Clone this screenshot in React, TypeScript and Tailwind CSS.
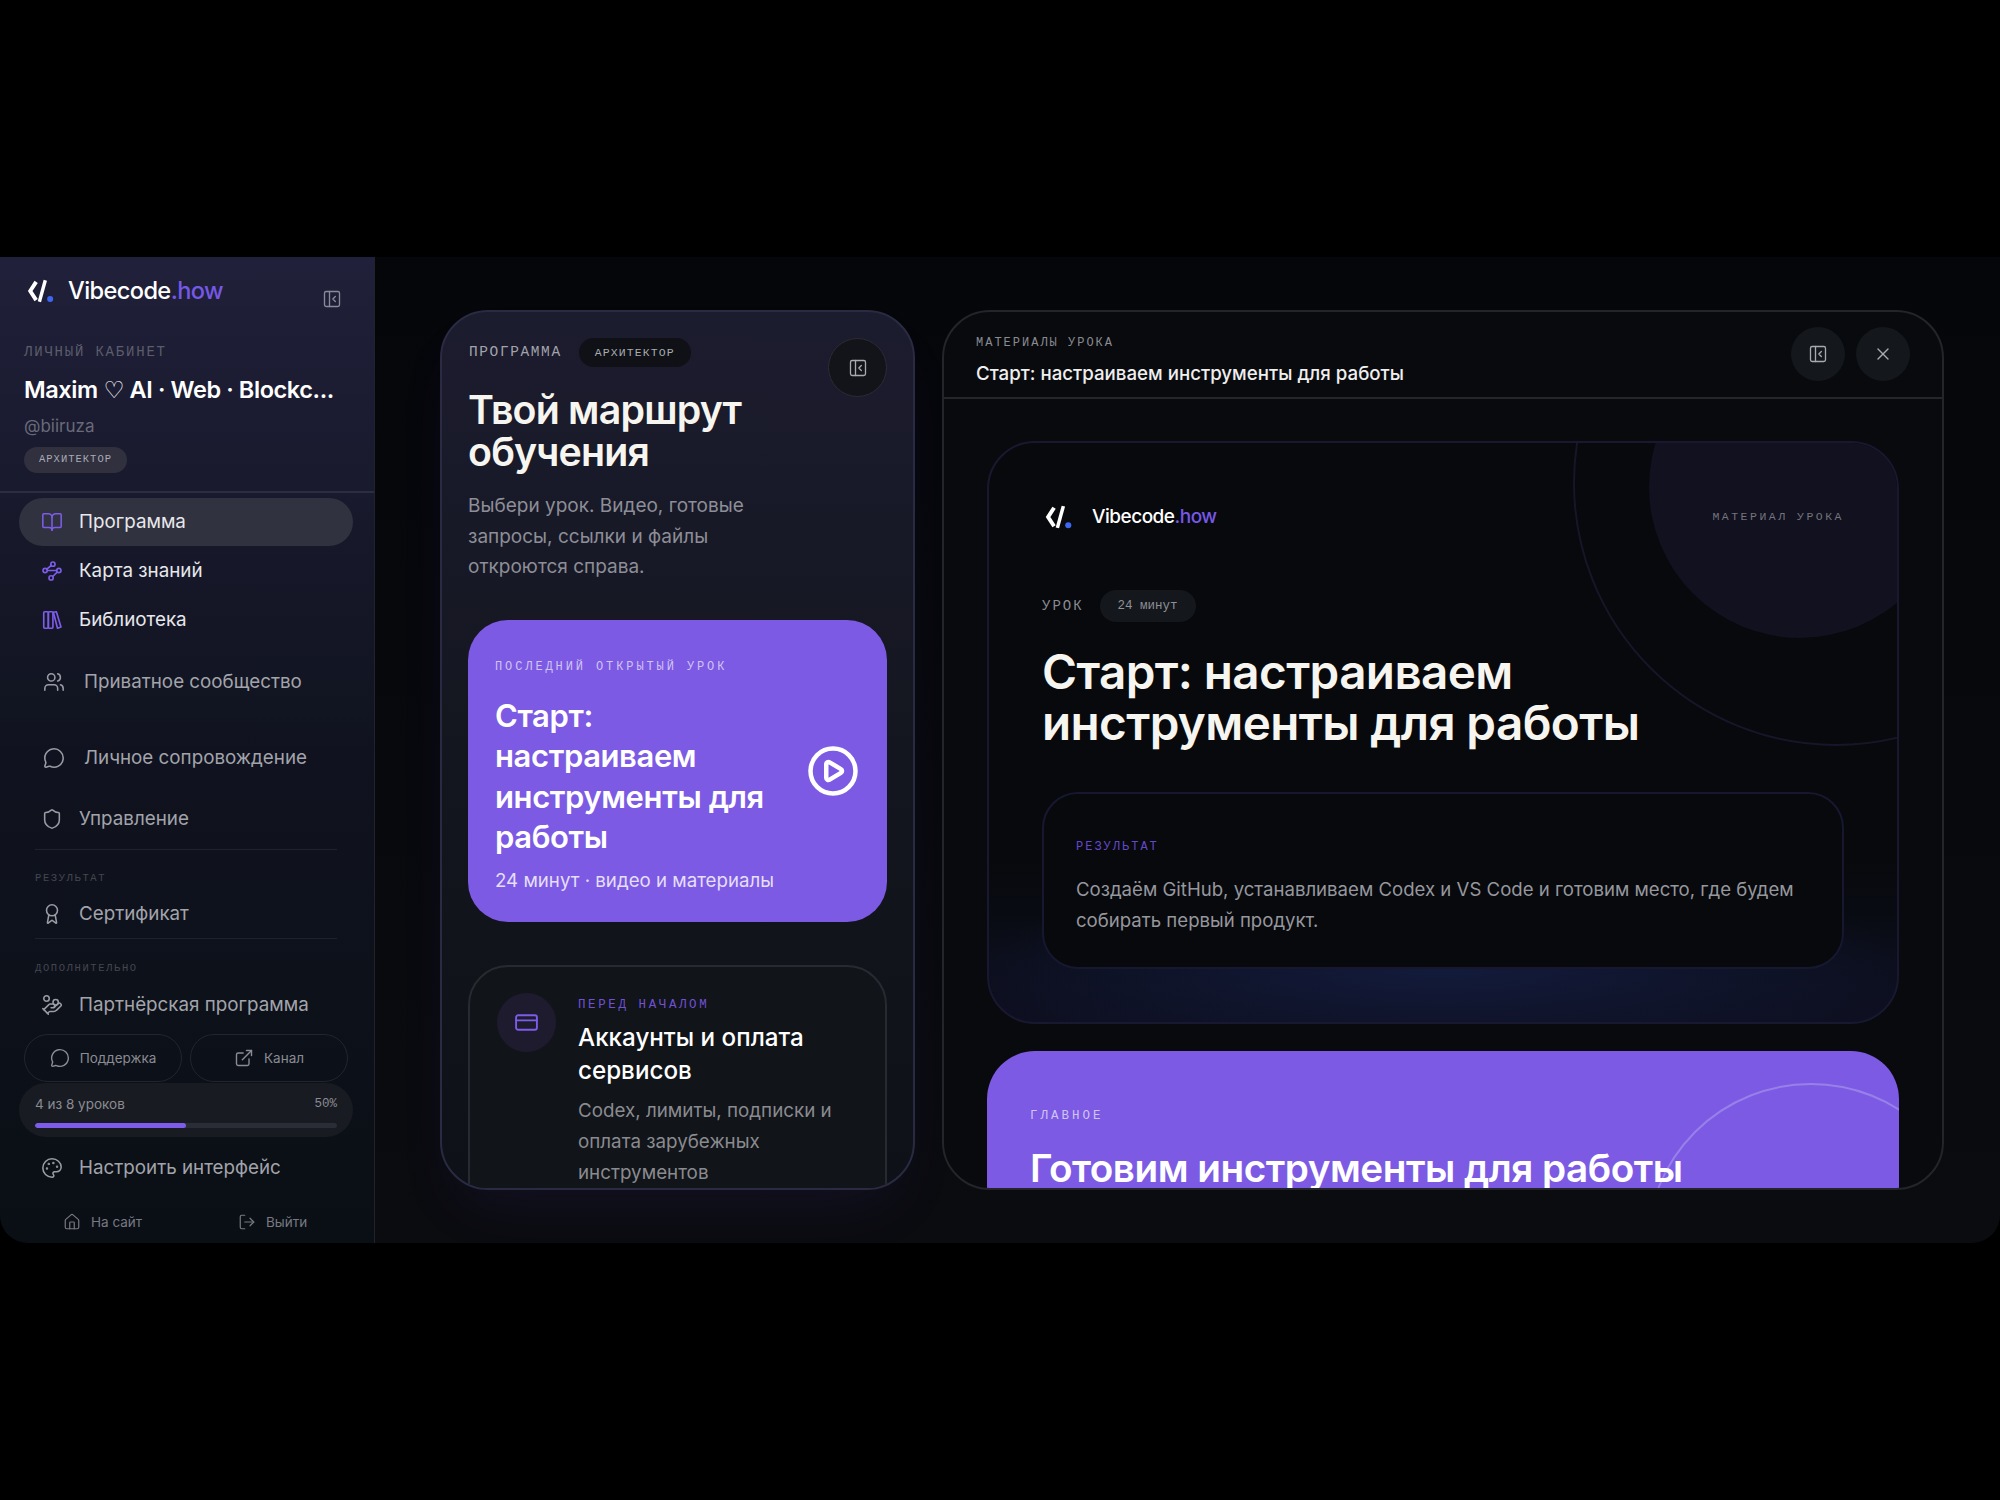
import {
  Award,
  BookOpen,
  CirclePlay,
  CreditCard,
  ExternalLink,
  HandCoins,
  House,
  LogOut,
  MessageCircle,
  Palette,
  PanelLeftClose,
  Shield,
  Users,
  X,
} from "lucide-react";
import type { FC, ReactNode } from "react";

const mono = "font-['Liberation_Mono',monospace]";

const LogoMark: FC<{ className?: string }> = ({ className }) => (
  <svg viewBox="0 0 26 22" fill="none" className={className}>
    <path d="M8.5 2.5 3 11l5.5 8.5" stroke="#fff" strokeWidth="3.6" />
    <path d="M17 1 11.5 21" stroke="#fff" strokeWidth="3.2" />
    <circle cx="21.5" cy="18.5" r="2.8" fill="#3f66f0" />
  </svg>
);

const MapIcon: FC = () => (
  <svg viewBox="0 0 24 24" fill="none" stroke="#7c5ce8" strokeWidth="1.8" strokeLinecap="round" className="h-[22px] w-[22px]">
    <circle cx="13" cy="4.5" r="2.3" />
    <circle cx="4.5" cy="11.5" r="2.3" />
    <circle cx="19.5" cy="11.5" r="2.3" />
    <circle cx="11" cy="19.5" r="2.3" />
    <path d="M11.2 6 6.3 10M7 11.5h10M17.7 13.2 12.8 18" />
  </svg>
);

const BooksIcon: FC = () => (
  <svg viewBox="0 0 24 24" fill="none" stroke="#7c5ce8" strokeWidth="1.8" strokeLinejoin="round" className="h-[22px] w-[22px]">
    <rect x="3" y="3" width="5" height="18" rx="1" />
    <rect x="8" y="3" width="5" height="18" rx="1" />
    <path d="M13.5 3.6 16.8 3l5 16.6-3.8 1.4z" />
  </svg>
);

const NavRow: FC<{
  icon: ReactNode;
  label: string;
  className?: string;
  gap?: string;
}> = ({ icon, label, className = "", gap = "gap-[16px] pl-[22px]" }) => (
  <div className={`flex h-12 items-center rounded-full text-[18.8px] text-[#a3a4ab] ${gap} ${className}`}>
    {icon}
    <span>{label}</span>
  </div>
);

const SectionLabel: FC<{ children: ReactNode; className?: string }> = ({ children, className = "" }) => (
  <div className={`${mono} h-4 pl-[16px] text-[10.5px] leading-4 tracking-[1.6px] text-[#43464f] ${className}`}>
    {children}
  </div>
);

const Sidebar: FC = () => (
  <aside className="flex w-[375px] shrink-0 flex-col rounded-bl-[28px] border-r border-[#20222c] bg-gradient-to-b from-[#20203a] via-[#10131f] to-[#0a0f15]">
    <div className="border-b-2 border-[#2c2d42] px-6 pb-[18px] pt-[10px]">
      <div className="flex h-12 items-center">
        <LogoMark className="ml-[3px] h-[24px] w-[28px]" />
        <div className="ml-[13px] text-[23.6px] font-medium tracking-[-0.6px] text-white">
          Vibecode<span className="text-[#7658e6]">.how</span>
        </div>
        <PanelLeftClose className="ml-auto mr-[8px] mt-[15px] h-5 w-5 text-[#8a8b98]" strokeWidth={1.6} />
      </div>
      <div className={`${mono} mt-[27px] h-5 text-[14px] leading-5 tracking-[1.8px] text-[#5c5d6c]`}>ЛИЧНЫЙ КАБИНЕТ</div>
      <div className="mt-[12px] h-8 whitespace-nowrap text-[23.5px] font-semibold leading-8 tracking-[-0.4px] text-white">
        Maxim <span className="font-['DejaVu_Sans'] font-normal">♡</span> AI · Web · Blockc...
      </div>
      <div className="mt-[9px] h-[22px] text-[17px] leading-[22px] text-[#686a78]">@biiruza</div>
      <div className={`${mono} mt-[10px] flex h-[26px] w-[103px] items-center justify-center rounded-full bg-[#30303f] text-[10.5px] tracking-[1px] text-[#a9aab4]`}>
        АРХИТЕКТОР
      </div>
    </div>

    <nav className="flex flex-col pl-[19px] pr-[21px] pt-[5px]">
      <NavRow
        icon={<BookOpen className="h-[22px] w-[22px] text-[#7c5ce8]" strokeWidth={1.7} />}
        label="Программа"
        className="bg-[#30323f] !text-[#e8e8ec]"
      />
      <NavRow icon={<MapIcon />} label="Карта знаний" className="mt-px !text-[#e8e8ec]" />
      <NavRow icon={<BooksIcon />} label="Библиотека" className="mt-px !text-[#e8e8ec]" />
      <NavRow
        icon={<Users className="h-[22px] w-[22px] text-[#9a9ba3]" strokeWidth={1.7} />}
        label="Приватное сообщество"
        className="mt-[14px]"
        gap="gap-[19px] pl-[24px]"
      />
      <NavRow
        icon={<MessageCircle className="h-[22px] w-[22px] text-[#9a9ba3]" strokeWidth={1.7} />}
        label="Личное сопровождение"
        className="mt-[28px]"
        gap="gap-[19px] pl-[24px]"
      />
      <NavRow
        icon={<Shield className="h-[22px] w-[22px] text-[#9a9ba3]" strokeWidth={1.7} />}
        label="Управление"
        className="mt-[13px]"
      />
      <div className="ml-[16px] mr-[16px] mt-[6px] border-t border-[#1f2229]" />
      <SectionLabel className="mt-[20px]">РЕЗУЛЬТАТ</SectionLabel>
      <NavRow
        icon={<Award className="h-[22px] w-[22px] text-[#9a9ba3]" strokeWidth={1.7} />}
        label="Сертификат"
        className="mt-[4px]"
      />
      <div className="mx-[16px] border-t border-[#1f2229]" />
      <SectionLabel className="mt-[21px]">ДОПОЛНИТЕЛЬНО</SectionLabel>
      <NavRow
        icon={<HandCoins className="h-[22px] w-[22px] text-[#9a9ba3]" strokeWidth={1.7} />}
        label="Партнёрская программа"
        className="mt-[5px]"
      />
      <div className="ml-[5px] mr-[5px] mt-[5px] flex gap-2">
        <div className="flex h-12 flex-1 items-center justify-center gap-[10px] rounded-full border border-[#22252c] text-[13.5px] text-[#8a8b93]">
          <MessageCircle className="h-5 w-5" strokeWidth={1.7} />
          Поддержка
        </div>
        <div className="flex h-12 flex-1 items-center justify-center gap-[10px] rounded-full border border-[#22252c] text-[13.5px] text-[#8a8b93]">
          <ExternalLink className="h-5 w-5" strokeWidth={1.7} />
          Канал
        </div>
      </div>
      <div className="mt-px h-[54px] rounded-full bg-[#181b22] px-4 pt-[12px]">
        <div className="flex h-[18px] items-center justify-between text-[13.5px] text-[#8a8b93]">
          <span>4 из 8 уроков</span>
          <span className={`${mono} text-[12.5px]`}>50%</span>
        </div>
        <div className="mt-[10px] h-[5px] overflow-hidden rounded-full bg-[#2a2d35]">
          <div className="h-full w-1/2 rounded-full bg-[#7c5ce8]" />
        </div>
      </div>
      <NavRow
        icon={<Palette className="h-[22px] w-[22px] text-[#9a9ba3]" strokeWidth={1.7} />}
        label="Настроить интерфейс"
        className="mt-[7px]"
      />
      <div className="mt-[6px] flex h-[48px] items-center text-[13.5px] text-[#787983]">
        <div className="flex w-[219px] items-center gap-[10px] pl-[44px]">
          <House className="h-[18px] w-[18px]" strokeWidth={1.6} />
          На сайт
        </div>
        <div className="flex items-center gap-[10px]">
          <LogOut className="h-[18px] w-[18px]" strokeWidth={1.6} />
          Выйти
        </div>
      </div>
    </nav>
  </aside>
);

const ProgramPanel: FC = () => (
  <section className="relative h-[880px] w-[475px] shrink-0 overflow-hidden rounded-[48px] border-2 border-[#2a2b42] bg-gradient-to-b from-[#1c1c2f] via-[#14161f] to-[#0f1118] px-[26px] shadow-[0_30px_60px_-20px_rgba(70,50,160,0.14)]">
    <div className="flex h-[85px] items-start justify-between pt-[26px]">
      <div className="flex h-[29px] items-center gap-[17px] pl-px">
        <span className={`${mono} text-[14.5px] tracking-[1.6px] text-[#a3a3ab]`}>ПРОГРАММА</span>
        <span className={`${mono} flex h-[29px] w-[112px] items-center justify-center rounded-full bg-[#0f1116] text-[11.5px] tracking-[1.1px] text-[#a9aab0]`}>
          АРХИТЕКТОР
        </span>
      </div>
      <div className="flex h-[59px] w-[59px] items-center justify-center rounded-full border border-[#2b2d33] bg-[#12141a]">
        <PanelLeftClose className="h-5 w-5 text-[#a9aab0]" strokeWidth={1.6} />
      </div>
    </div>
    <h1 className="-mt-[8px] text-[39.3px] font-semibold leading-[42px] tracking-[-0.8px] text-[#f7f5ef]">
      Твой маршрут
      <br />
      обучения
    </h1>
    <p className="mt-[18px] text-[19px] leading-[30.5px] text-[#8d8e97]">
      Выбери урок. Видео, готовые
      <br />
      запросы, ссылки и файлы
      <br />
      откроются справа.
    </p>
    <div className="mt-[37px] flex h-[302px] items-center rounded-[40px] bg-[#7c5ae3] px-[27px]">
      <div className="flex-1 self-stretch pt-[39px]">
        <div className={`${mono} h-4 text-[12px] leading-4 tracking-[2.9px] text-[#d0c4f5]`}>ПОСЛЕДНИЙ ОТКРЫТЫЙ УРОК</div>
        <div className="mt-[21px] text-[31px] font-semibold leading-[40.5px] tracking-[-0.4px] text-white">
          Старт:
          <br />
          настраиваем
          <br />
          инструменты для
          <br />
          работы
        </div>
        <div className="mt-[9px] text-[18.7px] leading-7 text-[#e5dffa]">24 минут · видео и материалы</div>
      </div>
      <CirclePlay className="h-[54px] w-[54px] shrink-0 text-white" strokeWidth={2} />
    </div>
    <div className="mt-[43px] flex h-[300px] gap-[22px] rounded-[40px] border-2 border-[#282a31] bg-[#111419] px-[27px] pt-[26px]">
      <div className="flex h-[59px] w-[59px] shrink-0 items-center justify-center rounded-full bg-[#1f1b2f]">
        <CreditCard className="h-[25px] w-[25px] text-[#7c5ce8]" strokeWidth={1.8} />
      </div>
      <div className="pt-[4px]">
        <div className={`${mono} text-[12.5px] leading-4 tracking-[2.6px] text-[#6f51d6]`}>ПЕРЕД НАЧАЛОМ</div>
        <div className="mt-[8px] text-[24.2px] font-medium leading-[33px] text-white">
          Аккаунты и оплата
          <br />
          сервисов
        </div>
        <div className="mt-[8px] text-[18.8px] leading-[31px] text-[#8a8b90]">
          Codex, лимиты, подписки и
          <br />
          оплата зарубежных
          <br />
          инструментов
        </div>
      </div>
    </div>
  </section>
);

const IconButton: FC<{ children: ReactNode }> = ({ children }) => (
  <div className="flex h-[54px] w-[54px] items-center justify-center rounded-full bg-[#14171b] text-[#a9aab0]">
    {children}
  </div>
);

const MaterialsPanel: FC = () => (
  <section className="relative h-[880px] flex-1 overflow-hidden rounded-[48px] border-2 border-[#23252a] bg-[#090a0e]">
    <header className="flex h-[87px] items-start justify-between border-b-2 border-[#24262b] pl-[32px] pr-[32px]">
      <div className="pt-[23px]">
        <div className={`${mono} text-[12px] leading-4 tracking-[2px] text-[#8b8c92]`}>МАТЕРИАЛЫ УРОКА</div>
        <div className="mt-[11px] text-[18.7px] font-medium leading-6 text-[#efefef]">
          Старт: настраиваем инструменты для работы
        </div>
      </div>
      <div className="flex gap-[11px] pt-[15px]">
        <IconButton>
          <PanelLeftClose className="h-5 w-5" strokeWidth={1.6} />
        </IconButton>
        <IconButton>
          <X className="h-5 w-5" strokeWidth={1.6} />
        </IconButton>
      </div>
    </header>
    <div className="px-[43px] pt-[42px]">
      <div className="relative h-[583px] overflow-hidden rounded-[48px] border-2 border-[#181930] bg-[radial-gradient(ellipse_55%_14%_at_50%_91%,#131b3c,transparent),linear-gradient(to_bottom,#07090c_72%,#0e1022)]">
        <div className="absolute left-[660px] top-[-107px] h-[302px] w-[302px] rounded-full bg-[#11111f]" />
        <div className="absolute left-[584px] top-[-223px] h-[526px] w-[526px] rounded-full border-2 border-[#161629]" />
        <div className="relative px-[53px] pt-[56px]">
          <div className="flex h-[36px] items-center">
            <LogoMark className="ml-[2px] h-[24px] w-[30px]" />
            <div className="ml-[18px] text-[19px] font-medium tracking-[-0.5px] text-white">
              Vibecode<span className="text-[#7658e6]">.how</span>
            </div>
            <div className={`${mono} ml-auto text-[11.5px] tracking-[2.5px] text-[#73747c]`}>МАТЕРИАЛ УРОКА</div>
          </div>
          <div className="mt-[55px] flex h-8 items-center gap-[16px]">
            <span className={`${mono} text-[14px] tracking-[2px] text-[#8a8b92]`}>УРОК</span>
            <span className={`${mono} flex h-8 w-[96px] items-center justify-center rounded-full bg-[#14171c] text-[12.5px] text-[#8f9096]`}>
              24 минут
            </span>
          </div>
          <h2 className="mt-[24px] text-[47.6px] font-semibold leading-[51px] tracking-[-0.6px] text-[#f7f5ef]">
            Старт: настраиваем
            <br />
            инструменты для работы
          </h2>
          <div className="mt-[44px] h-[177px] rounded-[36px] border-2 border-[#171830] bg-[#07090d] px-[32px] pt-[45px]">
            <div className={`${mono} text-[12px] leading-4 tracking-[2px] text-[#6448c8]`}>РЕЗУЛЬТАТ</div>
            <div className="mt-[19px] text-[18.6px] leading-[31px] text-[#96979d]">
              Создаём GitHub, устанавливаем Codex и VS Code и готовим место, где будем
              <br />
              собирать первый продукт.
            </div>
          </div>
        </div>
      </div>
      <div className="relative mt-[27px] h-[300px] overflow-hidden rounded-t-[48px] bg-[#7c5ae3] px-[43px] pt-[57px]">
        <div className="absolute left-[659px] top-[32px] h-[330px] w-[330px] rounded-full border-2 border-[#9880ea]" />
        <div className={`relative ${mono} text-[12.5px] leading-4 tracking-[3px] text-[#cfc4f4]`}>ГЛАВНОЕ</div>
        <div className="relative mt-[19px] text-[38.7px] font-semibold leading-[50px] tracking-[-0.5px] text-white">
          Готовим инструменты для работы
        </div>
      </div>
    </div>
  </section>
);

const App: FC = () => (
  <div className="flex h-screen w-screen items-center bg-black font-['Inter',sans-serif]">
    <div className="flex h-[986px] w-full overflow-hidden rounded-b-[28px] bg-gradient-to-b from-[#05060a] to-[#0b0c10]">
      <Sidebar />
      <main className="flex flex-1 items-center gap-[27px] pl-[65px] pr-[56px]">
        <ProgramPanel />
        <MaterialsPanel />
      </main>
    </div>
  </div>
);

export default App;
